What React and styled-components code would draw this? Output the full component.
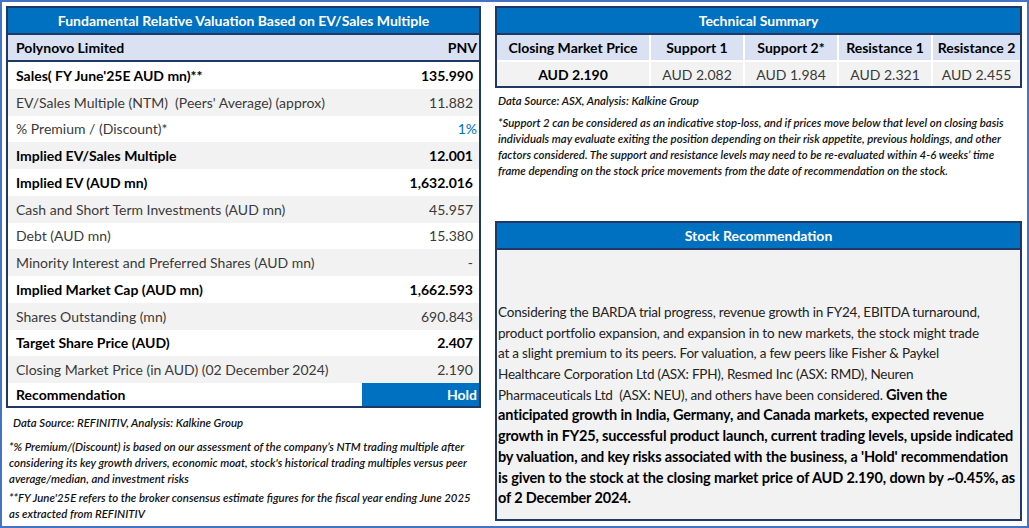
import React from "react";
import styled, { createGlobalStyle } from "styled-components";

const GlobalStyle = createGlobalStyle`
  body {
    margin: 0;
    background: #ffffff;
    font-family: Lato, "Liberation Sans", sans-serif;
  }
`;

const NAVY = "#1f3864";
const BLUE = "#0070c0";

const Frame = styled.div`
  width: 1029px;
  height: 528px;
  box-sizing: border-box;
  border: 2px solid #4472c4;
  padding: 4px 0 5px 4px;
  display: grid;
  grid-template-columns: 475px 527px;
  column-gap: 14px;
`;

const Column = styled.div`
  display: flex;
  flex-direction: column;
  min-height: 0;
`;

const Table = styled.div`
  border: 2px solid ${NAVY};
  display: flex;
  flex-direction: column;
`;

const TitleBar = styled.div`
  height: 25px;
  background: ${BLUE};
  color: #ffffff;
  font-weight: 700;
  font-size: 14px;
  display: flex;
  align-items: center;
  justify-content: center;
  border-bottom: 2px solid ${NAVY};
`;

const SubHead = styled.div`
  height: 25px;
  background: #d9e1f2;
  border-bottom: 2px solid ${NAVY};
  display: flex;
  align-items: center;
  justify-content: space-between;
  padding: 0 2px 0 8px;
  font-weight: 700;
  font-size: 14px;
  color: #000;
`;

const Row = styled.div`
  height: ${(p) => (p.$last ? "23px" : "26.75px")};
  background: ${(p) => (p.$shade ? "#f2f2f2" : "#ffffff")};
  display: flex;
  align-items: center;
  justify-content: space-between;
  font-size: 14px;
  font-weight: ${(p) => (p.$bold ? 700 : 400)};
  color: ${(p) => (p.$bold ? "#000" : "#3a3a3a")};
`;

const Label = styled.span`
  padding-left: 8px;
  white-space: pre;
`;

const Value = styled.span`
  padding-right: ${(p) => (p.$tight ? "2px" : "6px")};
  color: ${(p) => (p.$accent ? BLUE : "inherit")};
`;

const HoldCell = styled.span`
  align-self: stretch;
  width: 117px;
  box-sizing: border-box;
  background: ${BLUE};
  color: #ffffff;
  display: flex;
  align-items: center;
  justify-content: flex-end;
  padding-right: 2px;
`;

const Notes = styled.div`
  margin-top: ${(p) => p.$top}px;
  padding-left: ${(p) => p.$indent}px;
  font-style: italic;
  font-weight: 600;
  font-size: 11.4px;
  line-height: 16px;
  color: #111;
`;

const Note = styled.p`
  margin: ${(p) => p.$gap}px 0 0;
  padding-left: ${(p) => p.$shift || 0}px;
`;

const Line = styled.span`
  display: block;
  white-space: pre;
`;

const Grid = styled.div`
  display: grid;
  grid-template-columns: 152px 92px 92px 92px 1fr;
  grid-template-rows: 25px 24px;
  gap: 2px;
  background: #ffffff;
`;

const Cell = styled.div`
  background: ${(p) => (p.$head ? "#d9e1f2" : "#f2f2f2")};
  display: flex;
  align-items: center;
  justify-content: center;
  font-size: 14px;
  font-weight: ${(p) => (p.$bold ? 700 : 400)};
  color: ${(p) => (p.$bold ? "#000" : "#3a3a3a")};
  white-space: nowrap;
`;

const RecBox = styled.div`
  margin-top: auto;
  height: 300px;
  box-sizing: border-box;
  border: 2px solid ${NAVY};
  display: flex;
  flex-direction: column;
`;

const RecBody = styled.div`
  flex: 1;
  background: #f2f2f2;
  display: flex;
  flex-direction: column;
  justify-content: flex-end;
  padding: 0 2px 10px 1px;
  font-size: 13.5px;
  letter-spacing: -0.2px;
  line-height: 20.7px;
  color: #222;
`;

const TextLine = styled.span`
  display: block;
  white-space: pre;
`;

const Strong = styled.b`
  font-weight: 700;
  font-size: 14.5px;
  letter-spacing: -0.15px;
  color: #000;
`;

const rows = [
  ["Sales( FY June'25E AUD mn)**", "135.990", true, false],
  ["EV/Sales Multiple (NTM)  (Peers' Average) (approx)", "11.882", false, true],
  ["% Premium / (Discount)*", "1%", false, false, true],
  ["Implied EV/Sales Multiple", "12.001", true, true],
  ["Implied EV (AUD mn)", "1,632.016", true, false],
  ["Cash and Short Term Investments (AUD mn)", "45.957", false, true],
  ["Debt (AUD mn)", "15.380", false, false],
  ["Minority Interest and Preferred Shares (AUD mn)", "-", false, true],
  ["Implied Market Cap (AUD mn)", "1,662.593", true, false],
  ["Shares Outstanding (mn)", "690.843", false, true],
  ["Target Share Price (AUD)", "2.407", true, false],
  ["Closing Market Price (in AUD) (02 December 2024)", "2.190", false, true],
];

const levels = [
  ["Closing Market Price", "AUD 2.190", true],
  ["Support 1", "AUD 2.082"],
  ["Support 2*", "AUD 1.984"],
  ["Resistance 1", "AUD 2.321"],
  ["Resistance 2", "AUD 2.455"],
];

const premiumNote = [
  "*% Premium/(Discount) is based on our assessment of the company’s NTM trading multiple after",
  "considering its key growth drivers, economic moat, stock's historical trading multiples versus peer",
  "average/median, and investment risks",
];

const fyNote = [
  "**FY June'25E refers to the broker consensus estimate figures for the fiscal year ending June 2025",
  "as extracted from REFINITIV",
];

const supportNote = [
  "*Support 2 can be considered as an indicative stop-loss, and if prices move below that level on closing basis",
  "individuals may evaluate exiting the position depending on their risk appetite, previous holdings, and other",
  "factors considered. The support and resistance levels may need to be re-evaluated within 4-6 weeks’ time",
  "frame depending on the stock price movements from the date of recommendation on the stock.",
];

const plainLines = [
  "Considering the BARDA trial progress, revenue growth in FY24, EBITDA turnaround,",
  "product portfolio expansion, and expansion in to new markets, the stock might trade",
  "at a slight premium to its peers. For valuation, a few peers like Fisher & Paykel",
  "Healthcare Corporation Ltd (ASX: FPH), Resmed Inc (ASX: RMD), Neuren",
];

const boldLines = [
  "anticipated growth in India, Germany, and Canada markets, expected revenue",
  "growth in FY25, successful product launch, current trading levels, upside indicated",
  "by valuation, and key risks associated with the business, a 'Hold' recommendation",
  "is given to the stock at the closing market price of AUD 2.190, down by ~0.45%, as",
  "of 2 December 2024.",
];

export default function App() {
  return (
    <>
      <GlobalStyle />
      <Frame>
        <Column>
          <Table>
            <TitleBar>Fundamental Relative Valuation Based on EV/Sales Multiple</TitleBar>
            <SubHead>
              <span>Polynovo Limited</span>
              <span>PNV</span>
            </SubHead>
            {rows.map(([label, value, bold, shade, accent]) => (
              <Row key={label} $bold={bold} $shade={shade}>
                <Label>{label}</Label>
                <Value $accent={accent} $tight={accent}>{value}</Value>
              </Row>
            ))}
            <Row $bold $last>
              <Label>Recommendation</Label>
              <HoldCell>Hold</HoldCell>
            </Row>
          </Table>
          <Notes $top={7} $indent={3}>
            <Note $gap={0} $shift={4}>Data Source: REFINITIV, Analysis: Kalkine Group</Note>
            <Note $gap={8}>
              {premiumNote.map((l) => <Line key={l}>{l}</Line>)}
            </Note>
            <Note $gap={3}>
              {fyNote.map((l) => <Line key={l}>{l}</Line>)}
            </Note>
          </Notes>
        </Column>

        <Column>
          <Table>
            <TitleBar>Technical Summary</TitleBar>
            <Grid>
              {levels.map(([name]) => (
                <Cell key={name} $head $bold>{name}</Cell>
              ))}
              {levels.map(([name, price, bold]) => (
                <Cell key={price} $bold={bold}>{price}</Cell>
              ))}
            </Grid>
          </Table>
          <Notes $top={5} $indent={3}>
            <Note $gap={0}>Data Source: ASX, Analysis: Kalkine Group</Note>
            <Note $gap={6}>
              {supportNote.map((l) => <Line key={l}>{l}</Line>)}
            </Note>
          </Notes>
          <RecBox>
            <TitleBar>Stock Recommendation</TitleBar>
            <RecBody>
              {plainLines.map((l) => <TextLine key={l}>{l}</TextLine>)}
              <TextLine>
                Pharmaceuticals Ltd  (ASX: NEU), and others have been considered. <Strong>Given the</Strong>
              </TextLine>
              {boldLines.map((l) => (
                <TextLine key={l}>
                  <Strong>{l}</Strong>
                </TextLine>
              ))}
            </RecBody>
          </RecBox>
        </Column>
      </Frame>
    </>
  );
}
